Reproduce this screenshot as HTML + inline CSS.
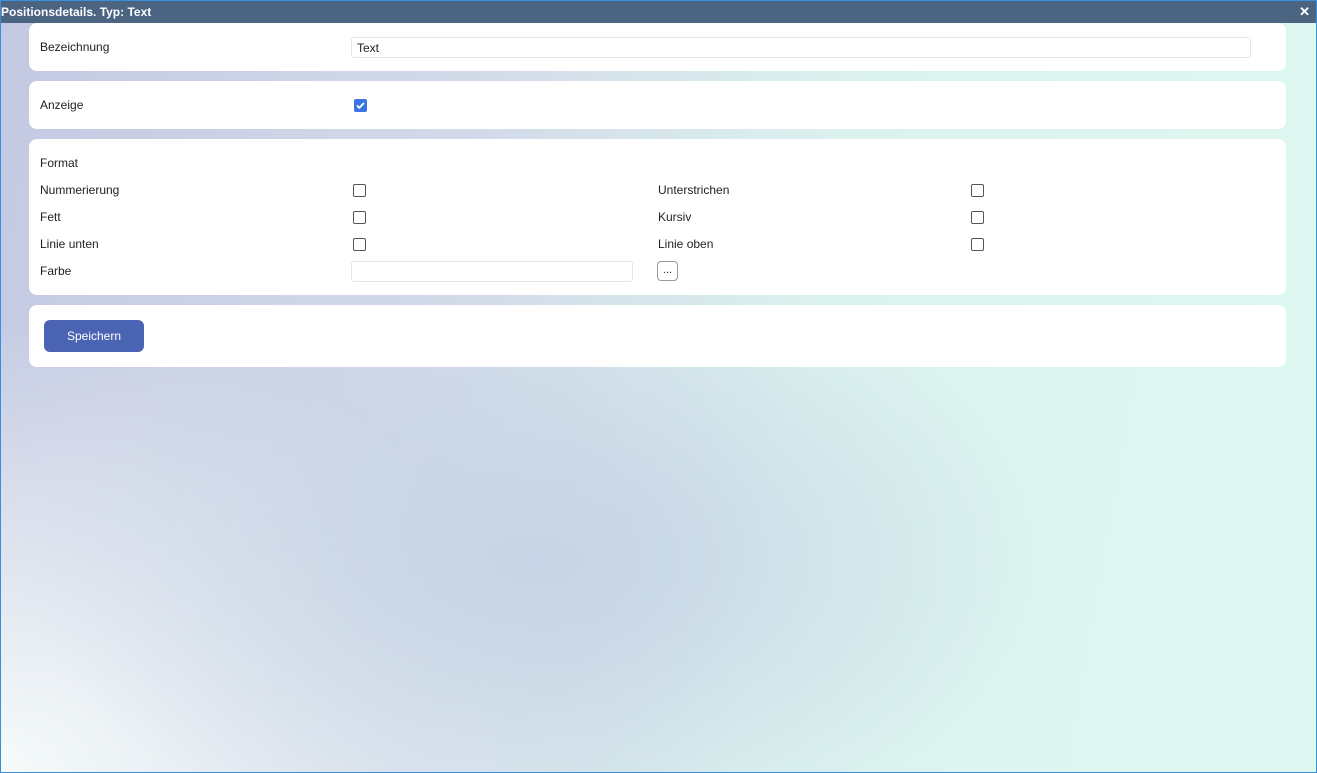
<!DOCTYPE html><html><head><style>
*{box-sizing:border-box}body{margin:0;width:1317px;height:773px;overflow:hidden;font-family:"Liberation Sans",Arial,sans-serif;font-size:12px;color:#222}
.win{position:absolute;left:0;top:0;width:1317px;height:773px;border:1px solid #3a8fd8;
background:radial-gradient(ellipse 520px 300px at 540px 560px,#c6d4e5 0%,rgba(200,214,230,0) 100%),
radial-gradient(ellipse 600px 450px at 0px 773px,#f6fbfa 0%,rgba(246,250,250,0) 100%),
linear-gradient(100deg,#c3c9e2 0%,#d3dbe9 35%,#dcf2ef 60%,#def8f1 100%);}
.title{height:22px;background:#4a6482;color:#fff;font-weight:bold;font-size:12px;line-height:22px;padding-left:0;position:relative}
.title .x{position:absolute;right:6px;top:0;font-size:13px}
.card{position:absolute;left:28px;width:1257px;background:#fff;border-radius:8px}
.lbl{position:absolute;left:11px}
.cb{position:absolute;width:13px;height:13px;border:1px solid #555;border-radius:2px;background:#fff}
.cb.on{background:#3b74e4;border-color:#3b74e4}
.inp{position:absolute;border:1px solid #e6e6e6;border-radius:3px;background:#fff}
</style></head><body><div class="win">
<div class="title">Positionsdetails. Typ: Text<span class="x">✕</span></div>
<div class="card" style="top:22px;height:48px">
<div class="lbl" style="top:17px">Bezeichnung</div>
<div class="inp" style="left:322px;top:14px;width:900px;height:21px;padding:3px 5px;font-size:12px">Text</div></div>
<div class="card" style="top:80px;height:48px">
<div class="lbl" style="top:17px">Anzeige</div>
<div class="cb on" style="left:325px;top:18px"><svg width="11" height="11" viewBox="0 0 11 11" style="position:absolute;left:0;top:0"><path d="M2 5.5l2.3 2.3L9 3" stroke="#fff" stroke-width="1.8" fill="none"/></svg></div></div>
<div class="card" style="top:138px;height:156px">
<div class="lbl" style="top:17px">Format</div>
<div class="lbl" style="top:44px">Nummerierung</div><div class="cb" style="left:324px;top:45px"></div>
<div class="lbl" style="top:71px">Fett</div><div class="cb" style="left:324px;top:72px"></div>
<div class="lbl" style="top:98px">Linie unten</div><div class="cb" style="left:324px;top:99px"></div>
<div class="lbl" style="top:125px">Farbe</div>
<div class="inp" style="left:322px;top:122px;width:282px;height:21px"></div>
<div class="lbl" style="left:629px;top:44px">Unterstrichen</div><div class="cb" style="left:942px;top:45px"></div>
<div class="lbl" style="left:629px;top:71px">Kursiv</div><div class="cb" style="left:942px;top:72px"></div>
<div class="lbl" style="left:629px;top:98px">Linie oben</div><div class="cb" style="left:942px;top:99px"></div>
<div style="position:absolute;left:628px;top:122px;width:21px;height:20px;border:1px solid #999;border-radius:4px;text-align:center;line-height:16px;font-size:11px">...</div>
</div>
<div class="card" style="top:304px;height:62px">
<div style="position:absolute;left:15px;top:15px;width:100px;height:32px;background:#4b63b3;color:#fff;border-radius:6px;text-align:center;line-height:32px">Speichern</div></div>
</div></body></html>
